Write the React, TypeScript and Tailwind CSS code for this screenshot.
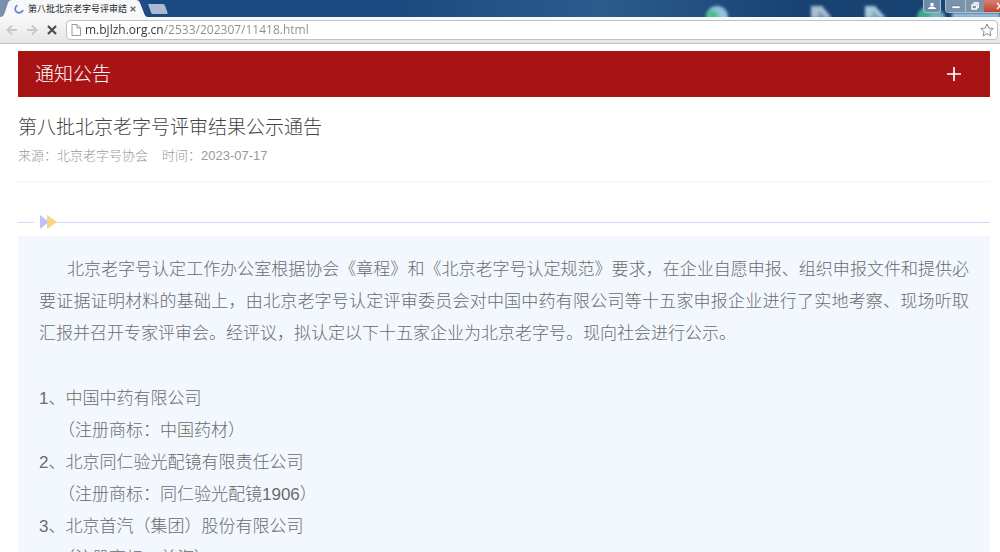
import { ReactNode } from "react";

const companies = [
  { name: "中国中药有限公司", trademark: "中国药材" },
  { name: "北京同仁验光配镜有限责任公司", trademark: "同仁验光配镜1906" },
  { name: "北京首汽（集团）股份有限公司", trademark: "首汽" },
];

function NavButton({ label, children }: { label: string; children: ReactNode }) {
  return (
    <button type="button" aria-label={label} className="flex h-5 w-5 items-center justify-center">
      {children}
    </button>
  );
}

// Desktop icons showing through the glass title bar
function DesktopIcons() {
  return (
    <svg className="absolute top-0 right-0 h-full w-80" viewBox="0 0 320 17" aria-hidden="true">
      <defs>
        <filter id="glass" x="-20%" y="-50%" width="140%" height="200%">
          <feGaussianBlur stdDeviation="1.5" />
        </filter>
      </defs>
      <g filter="url(#glass)">
        <circle cx="37" cy="17" r="11" fill="#8fc3d6" />
        <circle cx="32" cy="16" r="6" fill="#4cbf93" />
        <path d="M131 6h11l10 12h-21z" fill="#a9c0d3" />
        <path d="M139 11l7 6h-8z" fill="#7390ac" />
        <path d="M185 6h10l11 12h-21z" fill="#a9c8da" />
        <path d="M193 11l7 6h-8z" fill="#7a9cb5" />
        <circle cx="247" cy="17" r="10" fill="#3fa98c" />
        <circle cx="257" cy="18" r="8" fill="#6fb0b8" />
        <path d="M272 13h48v5h-48z" fill="#9cc6dd" />
      </g>
    </svg>
  );
}

function TitleBar() {
  return (
    <header className="relative flex h-[17px] items-start bg-linear-to-r from-[#7d8fae] from-0% via-[#1b4a82] via-15% to-[#1d4a7b]">
      <div className="absolute inset-0 bg-linear-to-r from-transparent from-40% via-[#2c5c8d] via-60% to-[#174272] to-80%" />
      <DesktopIcons />

      <div className="relative flex h-full w-[148px] items-center pl-3.5">
        <svg className="absolute inset-0 h-full w-full" viewBox="0 0 148 17" preserveAspectRatio="none" aria-hidden="true">
          <path d="M0 17c3 0 4-2 5-5l3-9q1-3 4-3h124q3 0 4 3l4 10q1 4 4 4z" fill="#f7f8fa" />
        </svg>
        <svg className="relative h-2.5 w-2.5 shrink-0" viewBox="0 0 10 10" fill="none" aria-hidden="true">
          <path d="M3.5 1.2A4 4 0 1 0 9 6" stroke="#5f83dc" strokeWidth="1.7" />
        </svg>
        <span className="relative ml-1 w-[99px] overflow-hidden text-[9px] leading-4 whitespace-nowrap text-[#222]">
          第八批北京老字号评审结
        </span>
        <button type="button" aria-label="关闭标签页" className="relative ml-0.5 flex h-3 w-2 items-center justify-center">
          <svg className="h-1.5 w-1.5" viewBox="0 0 6 6" stroke="#666" strokeWidth="1.3" aria-hidden="true">
            <path d="M.7.7l4.6 4.6M5.3.7L.7 5.3" />
          </svg>
        </button>
      </div>

      <button type="button" aria-label="新标签页" className="relative h-full w-5">
        <svg className="h-full w-full" viewBox="0 0 20 17" aria-hidden="true">
          <path d="M0 4h15q1.500 0 2 1.500l2.500 7q.5 1.500-1 1.500H5q-1.500 0-2-1.500z" fill="#a9bbd3" />
        </svg>
      </button>

      <div className="relative ml-auto flex items-start gap-1">
        <button type="button" aria-label="用户" className="flex h-[13px] w-[18px] items-center justify-center rounded-b border border-t-0 border-[#aebfd0] bg-[#6f8aa6]">
          <svg className="h-2 w-2.5" viewBox="0 0 10 8" fill="#fff" aria-hidden="true">
            <circle cx="5" cy="2.500" r="1.800" />
            <path d="M1 7q0-2 4-2.500 4 .5 4 2.500z" />
          </svg>
        </button>
        <div className="flex h-[13px] overflow-hidden rounded-bl border border-t-0 border-r-0 border-[#aebfd0]">
          <button type="button" aria-label="最小化" className="flex w-[19px] items-center justify-center bg-[#7b93ab]">
            <svg className="h-2 w-2.5" viewBox="0 0 10 8" aria-hidden="true">
              <path d="M1 4h8v2.500H1z" fill="#fff" stroke="#52677d" strokeWidth=".5" />
            </svg>
          </button>
          <button type="button" aria-label="还原" className="flex w-[19px] items-center justify-center border-l border-[#aebfd0] bg-[#7b93ab]">
            <svg className="h-2 w-2" viewBox="0 0 8 8" fill="none" stroke="#fff" strokeWidth="1.300" aria-hidden="true">
              <path d="M1 3h4.500v4H1zM3 2.500V1h4.300v4.500H6" />
            </svg>
          </button>
          <button type="button" aria-label="关闭" className="flex w-4 items-center justify-end bg-linear-to-b from-[#d87f70] to-[#c0432c]">
            <svg className="h-2 w-1" viewBox="0 0 4 8" stroke="#fff" strokeWidth="1.500" aria-hidden="true">
              <path d="M1 1l3 3M1 7l3-3" />
            </svg>
          </button>
        </div>
      </div>
    </header>
  );
}

function Toolbar() {
  return (
    <nav className="flex h-[27px] items-center border-b border-[#c4c4c4] bg-linear-to-b from-[#f8f9fa] to-[#e6e6e6] pl-0.5">
      <NavButton label="后退">
        <svg className="h-3 w-3" viewBox="0 0 12 12" fill="none" stroke="#c9c9c9" strokeWidth="2" aria-hidden="true">
          <path d="M11 6H2M6 1.500L1.500 6 6 10.500" />
        </svg>
      </NavButton>
      <NavButton label="前进">
        <svg className="h-3 w-3" viewBox="0 0 12 12" fill="none" stroke="#c9c9c9" strokeWidth="2" aria-hidden="true">
          <path d="M1 6h9M6 1.500L10.500 6 6 10.500" />
        </svg>
      </NavButton>
      <NavButton label="停止">
        <svg className="h-2.5 w-2.5" viewBox="0 0 10 10" stroke="#4a4a4a" strokeWidth="2.200" aria-hidden="true">
          <path d="M1 1l8 8M9 1L1 9" />
        </svg>
      </NavButton>
      <div className="ml-1 mr-0.5 flex h-5 min-w-0 flex-1 items-center rounded-sm border border-[#c2c2c2] bg-white pr-0.5 pl-1">
        <svg className="h-3 w-2.5 shrink-0" viewBox="0 0 10 12" fill="#fff" stroke="#999" aria-hidden="true">
          <path d="M1 .5h5l3.500 3.500v7.500H1zM6 .5V4h3.500" />
        </svg>
        <input
          type="text"
          aria-label="地址"
          defaultValue="m.bjlzh.org.cn/2533/202307/11418.html"
          className="ml-1 h-4 min-w-0 flex-1 bg-linear-to-r from-[#333] from-[78px] to-[#8c8c8c] to-[78px] bg-clip-text font-['Open_Sans','Noto_Sans',sans-serif] text-[12px] leading-4 text-transparent outline-none"
        />
        <button type="button" aria-label="收藏" className="flex h-4 w-4 items-center justify-center">
          <svg className="h-3.5 w-3.5" viewBox="0 0 14 14" fill="#fff" stroke="#8a8a8a" strokeLinejoin="round" aria-hidden="true">
            <path d="M7 1l1.800 4.100 4.400.4-3.300 3 1 4.400L7 10.600l-3.900 2.300 1-4.400-3.300-3 4.400-.4z" />
          </svg>
        </button>
      </div>
    </nav>
  );
}

function Divider() {
  return (
    <div className="mt-8 flex h-4 items-center">
      <span className="h-px w-4 bg-[#d3dcf8]" />
      <svg className="ml-1.5 h-3.5 w-[17px] shrink-0" viewBox="0 0 17 14" aria-hidden="true">
        <path d="M0 0l9 7-9 7z" fill="#bcc4f7" />
        <path d="M7 0l10 7-10 7z" fill="#fbd48a" />
      </svg>
      <span className="h-px flex-1 bg-[#cfdaf8]" />
    </div>
  );
}

export default function App() {
  return (
    <div lang="zh-CN" className="flex h-screen flex-col overflow-hidden bg-white font-['Liberation_Sans','Noto_Sans_CJK_SC',sans-serif]">
      <TitleBar />
      <Toolbar />

      <main className="min-h-0 flex-1 overflow-hidden pt-[7px] pr-2.5 pl-[18px]">
        <div className="flex h-[46px] items-center justify-between bg-[#a81416] pr-[29px] pl-[17px] text-white">
          <h2 className="pt-0.5 text-[19px] leading-6 font-light">通知公告</h2>
          <button type="button" aria-label="展开" className="flex h-3.5 w-3.5 items-center justify-center">
            <svg className="h-3.5 w-3.5" viewBox="0 0 14 14" stroke="#fff" strokeWidth="1.700" aria-hidden="true">
              <path d="M7 0v14M0 7h14" />
            </svg>
          </button>
        </div>

        <article>
          <h1 className="mt-[17px] text-[19px] leading-7 font-light text-[#444]">第八批北京老字号评审结果公示通告</h1>
          <p className="mt-1 flex gap-3.5 border-b border-dotted border-[#ebebeb] pb-[15px] text-[13px] leading-5 font-light text-[#999]">
            <span>来源：北京老字号协会</span>
            <span>时间：2023-07-17</span>
          </p>

          <Divider />

          <section className="mt-1.5 bg-[#f3f8ff] px-[21px] pt-[18px] pb-8 text-[17px] leading-8 font-light text-[#6b6b6b]">
            <p className="indent-7 text-justify">
              北京老字号认定工作办公室根据协会《章程》和《北京老字号认定规范》要求，在企业自愿申报、组织申报文件和提供必要证据证明材料的基础上，由北京老字号认定评审委员会对中国中药有限公司等十五家申报企业进行了实地考察、现场听取汇报并召开专家评审会。经评议，拟认定以下十五家企业为北京老字号。现向社会进行公示。
            </p>
            <ol className="mt-[33px]">
              {companies.map((company, index) => (
                <li key={company.name}>
                  <p>{index + 1}、{company.name}</p>
                  <p className="pl-[19px]">（注册商标：{company.trademark}）</p>
                </li>
              ))}
            </ol>
          </section>
        </article>
      </main>
    </div>
  );
}
